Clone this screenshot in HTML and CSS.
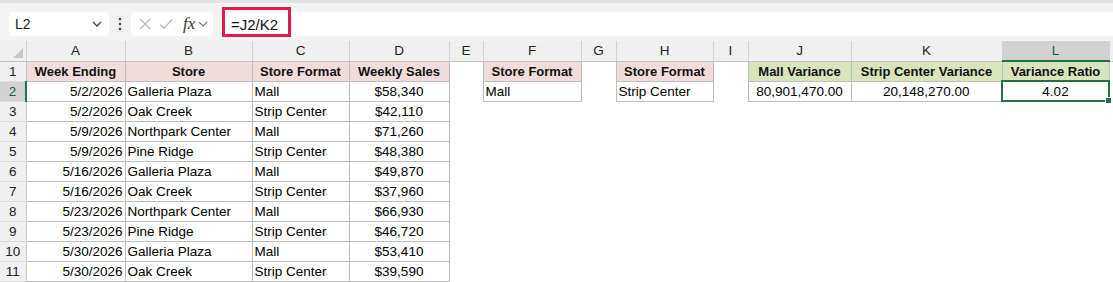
FILE: index.html
```html
<!DOCTYPE html>
<html lang="en">

<head>
    <meta charset="UTF-8">
    <title>Variance Ratio</title>
    <link rel="stylesheet" href="styles.css">
</head>

<body>

    <div class="toolbar">
        <div class="name-box">
            <span>L2</span>
            <svg width="10" height="6" viewBox="0 0 10 6"><path d="M1 1 L5 5 L9 1" fill="none" stroke="#444" stroke-width="1.3"/></svg>
        </div>
        <div class="dots">
            <svg width="4" height="14" viewBox="0 0 4 14"><circle cx="2" cy="2" r="1.3" fill="#444"/><circle cx="2" cy="7" r="1.3" fill="#444"/><circle cx="2" cy="12" r="1.3" fill="#444"/></svg>
        </div>
        <div class="fx-box">
            <svg width="12" height="12" viewBox="0 0 12 12"><path d="M1 1 L11 11 M11 1 L1 11" stroke="#b4b4b4" stroke-width="1.2"/></svg>
            <svg width="14" height="12" viewBox="0 0 14 12"><path d="M1 6.5 L5 10.5 L13 1.5" fill="none" stroke="#b4b4b4" stroke-width="1.2"/></svg>
            <span class="fx">fx</span>
            <svg width="10" height="6" viewBox="0 0 10 6"><path d="M1 1 L5 5 L9 1" fill="none" stroke="#777" stroke-width="1.2"/></svg>
        </div>
        <div class="formula">
            <span class="formula-text">=J2/K2</span>
            <span class="highlight"></span>
        </div>
    </div>

    <table class="sheet">
        <colgroup>
            <col style="width:26px"><col style="width:99px"><col style="width:127px"><col style="width:97px"><col style="width:100px">
            <col style="width:34px"><col style="width:98px"><col style="width:35px"><col style="width:97px"><col style="width:35px">
            <col style="width:103px"><col style="width:151px"><col style="width:107px"><col style="width:4px">
        </colgroup>
        <tr class="col-heads">
            <th class="corner">
                <svg width="12" height="12" viewBox="0 0 12 12"><path d="M11 1 L11 11 L1 11 Z" fill="#c8c8c8"/></svg>
            </th>
            <th>A</th><th>B</th><th>C</th><th>D</th><th>E</th><th>F</th><th>G</th><th>H</th><th>I</th><th>J</th><th>K</th><th class="sel-col">L</th><th></th>
        </tr>
        <tr>
            <td class="rn">1</td>
            <td class="b hd pink">Week Ending</td>
            <td class="b hd pink">Store</td>
            <td class="b hd pink">Store Format</td>
            <td class="b hd pink">Weekly Sales</td>
            <td></td>
            <td class="b hd pink">Store Format</td>
            <td></td>
            <td class="b hd pink">Store Format</td>
            <td></td>
            <td class="b hd green">Mall Variance</td>
            <td class="b hd green">Strip Center Variance</td>
            <td class="b hd green">Variance Ratio</td>
            <td></td>
        </tr>
        <tr>
            <td class="rn sel-row">2</td>
            <td class="b r">5/2/2026</td><td class="b">Galleria Plaza</td><td class="b">Mall</td><td class="b c">$58,340</td>
            <td></td>
            <td class="b">Mall</td>
            <td></td>
            <td class="b">Strip Center</td>
            <td></td>
            <td class="b c">80,901,470.00</td>
            <td class="b c">20,148,270.00</td>
            <td class="c active">4.02<span class="handle"></span></td>
            <td></td>
        </tr>
        <tr><td class="rn">3</td><td class="b r">5/2/2026</td><td class="b">Oak Creek</td><td class="b">Strip Center</td><td class="b c">$42,110</td><td colspan="9"></td></tr>
        <tr><td class="rn">4</td><td class="b r">5/9/2026</td><td class="b">Northpark Center</td><td class="b">Mall</td><td class="b c">$71,260</td><td colspan="9"></td></tr>
        <tr><td class="rn">5</td><td class="b r">5/9/2026</td><td class="b">Pine Ridge</td><td class="b">Strip Center</td><td class="b c">$48,380</td><td colspan="9"></td></tr>
        <tr><td class="rn">6</td><td class="b r">5/16/2026</td><td class="b">Galleria Plaza</td><td class="b">Mall</td><td class="b c">$49,870</td><td colspan="9"></td></tr>
        <tr><td class="rn">7</td><td class="b r">5/16/2026</td><td class="b">Oak Creek</td><td class="b">Strip Center</td><td class="b c">$37,960</td><td colspan="9"></td></tr>
        <tr><td class="rn">8</td><td class="b r">5/23/2026</td><td class="b">Northpark Center</td><td class="b">Mall</td><td class="b c">$66,930</td><td colspan="9"></td></tr>
        <tr><td class="rn">9</td><td class="b r">5/23/2026</td><td class="b">Pine Ridge</td><td class="b">Strip Center</td><td class="b c">$46,720</td><td colspan="9"></td></tr>
        <tr><td class="rn">10</td><td class="b r">5/30/2026</td><td class="b">Galleria Plaza</td><td class="b">Mall</td><td class="b c">$53,410</td><td colspan="9"></td></tr>
        <tr><td class="rn">11</td><td class="b r">5/30/2026</td><td class="b">Oak Creek</td><td class="b">Strip Center</td><td class="b c">$39,590</td><td colspan="9"></td></tr>
    </table>

</body>

</html>
```

FILE: styles.css
```css
body {
    margin: 0;
    width: 1113px;
    height: 282px;
    overflow: hidden;
    background: white;
    font-family: "Liberation Sans", Arial, sans-serif;
    color: #000;
}

.toolbar {
    display: flex;
    align-items: center;
    height: 41px;
    box-sizing: border-box;
    padding: 6px 0 2px 9px;
    background: #f3f3f3;
    border-top: 3px solid #e3e3e3;
}

.name-box {
    flex: none;
    display: flex;
    align-items: center;
    justify-content: space-between;
    width: 100px;
    height: 24px;
    box-sizing: border-box;
    padding: 0 7px 0 6px;
    background: white;
    border-radius: 4px;
    font-size: 14px;
    color: #222;
}

.dots {
    flex: none;
    width: 22px;
    display: flex;
    justify-content: center;
}

.fx-box {
    flex: none;
    display: flex;
    align-items: center;
    gap: 8px;
    width: 82px;
    height: 24px;
    box-sizing: border-box;
    padding-left: 8px;
    background: white;
    border-radius: 4px;
}

.fx {
    font-family: "Liberation Serif", "Times New Roman", serif;
    font-style: italic;
    font-size: 17px;
    color: #333;
    margin-left: 2px;
    margin-right: -5px;
}

.formula {
    position: relative;
    flex: 1;
    height: 24px;
    margin-left: 9px;
    background: white;
    border-radius: 4px 0 0 4px;
    display: flex;
    align-items: center;
    padding-left: 9px;
    font-size: 15px;
    color: #111;
}

.highlight {
    position: absolute;
    left: 0;
    top: -5px;
    width: 69px;
    height: 30px;
    box-sizing: border-box;
    border: 3px solid #e31b4d;
}

.sheet {
    border-collapse: collapse;
    table-layout: fixed;
    width: 1113px;
    font-size: 13.5px;
}

.sheet td,
.sheet th {
    height: 20px;
    padding: 0 2px;
    box-sizing: border-box;
    white-space: nowrap;
    overflow: hidden;
}

.col-heads th {
    background: #f0f0f0;
    font-weight: normal;
    font-size: 13.5px;
    color: #222;
    border-right: 1px solid #d3d3d3;
    border-bottom: 1px solid #c4c4c4;
}

.col-heads .corner {
    text-align: right;
    vertical-align: bottom;
    padding: 0 2px 2px 0;
    line-height: 0;
}

.col-heads .sel-col {
    background: #d2d2d2;
    color: #1e5c38;
    border-bottom: 2px solid #217346;
}

.rn {
    background: #f0f0f0;
    text-align: center;
    font-size: 13.5px;
    color: #222;
    border-right: 1px solid #c4c4c4;
    border-bottom: 1px solid #dcdcdc;
}

.rn.sel-row {
    background: #d2d2d2;
    color: #1e5c38;
    border-right: 2px solid #217346;
}

.b {
    border: 1px solid #bdbdbd;
}

.hd {
    font-weight: bold;
    font-size: 13px;
    text-align: center;
    color: #111;
}

.pink {
    background: #f2dcdb;
}

.green {
    background: #d8e4bc;
}

.r {
    text-align: right;
}

.c {
    text-align: center;
}

.sheet td.active {
    position: relative;
    overflow: visible;
    border: 2px solid #217346;
}

.handle {
    position: absolute;
    right: -4px;
    bottom: -4px;
    width: 5px;
    height: 5px;
    background: #217346;
    border: 1px solid white;
}
```
